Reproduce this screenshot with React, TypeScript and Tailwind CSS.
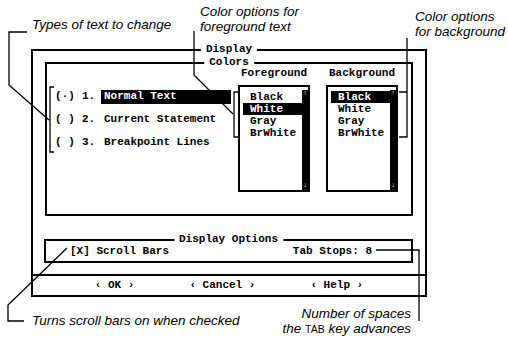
const mono = "font-['Liberation_Mono',monospace] font-bold text-[11px] leading-none text-black";
const note = "font-['Liberation_Sans',Arial,sans-serif] italic text-[13.5px] leading-[14.5px] text-black";

function Title({ text, top }: { text: string; top: string }) {
  return (
    <span className={`absolute left-1/2 -translate-x-1/2 whitespace-pre bg-white px-[5px] ${top}`}>
      {text}
    </span>
  );
}

function ListBox({ items, selected }: { items: string[]; selected: string }) {
  return (
    <div className="flex h-[107px] w-[72px] border-2 border-black">
      <div className="flex flex-1 flex-col pl-[3px] pt-[4px]">
        {items.map((it) => (
          <div
            key={it}
            className={
              it === selected
                ? "flex h-[12px] items-center bg-black pl-[7px] text-white"
                : "flex h-[12px] items-center pl-[7px]"
            }
          >
            {it}
          </div>
        ))}
      </div>
      <div className="mt-[3px] flex w-[6px] flex-col items-center justify-between bg-black pb-[1px] text-[7px] leading-none text-white">
        <span>↑</span>
        <span>↓</span>
      </div>
    </div>
  );
}

function RadioRow({ mark, num, label, on }: { mark: string; num: string; label: string; on?: boolean }) {
  return (
    <div className="flex h-[23px] items-center whitespace-pre">
      <span className="w-[27px]">{mark}</span>
      <span className="w-[19px]">{num}</span>
      <span
        className={
          on
            ? "flex h-[14px] w-[130px] items-center bg-black px-[3px] text-white"
            : "flex h-[14px] w-[130px] items-center px-[3px]"
        }
      >
        {label}
      </span>
    </div>
  );
}

export default function App() {
  const colors = ["Black", "White", "Gray", "BrWhite"];
  return (
    <div className="relative h-[348px] w-[508px] overflow-hidden bg-white">
      {/* callout labels above the dialog */}
      <div className={`flex h-[49px] items-start ${note}`}>
        <div className="mt-[18px] w-[168px] shrink-0 pl-[32px] whitespace-nowrap">Types of text to change</div>
        <div className="mt-[5px] w-[247px] shrink-0 pl-[32px]">
          Color options for
          <br />
          foreground text
        </div>
        <div className="mt-[10px] whitespace-nowrap">
          Color options
          <br />
          for background
        </div>
      </div>

      {/* dialog */}
      <div className={`relative ml-[31px] flex h-[248px] w-[396px] flex-col border-2 border-black ${mono}`}>
        <Title text="Display" top="top-[-7px]" />

        <div className="relative mx-[12px] mt-[11px] flex h-[154px] border-2 border-black">
          <Title text="Colors" top="top-[-7px]" />
          <div className="mt-[21px] flex w-[191px] shrink-0 flex-col pl-[8px]">
            <RadioRow mark="(·)" num="1." label="Normal Text" on />
            <RadioRow mark="( )" num="2." label="Current Statement" />
            <RadioRow mark="( )" num="3." label="Breakpoint Lines" />
          </div>
          <div className="flex w-[72px] flex-col items-center pt-[2px]">
            <div className="flex h-[14px] items-center">Foreground</div>
            <div className="mt-[5px]">
              <ListBox items={colors} selected="White" />
            </div>
          </div>
          <div className="ml-[16px] flex w-[72px] flex-col items-center pt-[2px]">
            <div className="flex h-[14px] items-center">Background</div>
            <div className="mt-[5px]">
              <ListBox items={colors} selected="Black" />
            </div>
          </div>
        </div>

        <div className="relative ml-[11px] mr-[12px] mt-[23px] flex h-[24px] items-center justify-between border-2 border-black pl-[24px] pr-[39px] whitespace-pre">
          <Title text="Display Options" top="top-[-7px]" />
          <span>[X] Scroll Bars</span>
          <span>Tab Stops: 8</span>
        </div>

        <div className="mt-[11px] flex h-[21px] items-center justify-center gap-[55px] border-t-2 border-black whitespace-pre">
          <span>‹ OK ›</span>
          <span>‹ Cancel ›</span>
          <span>‹ Help ›</span>
        </div>
      </div>

      {/* callout labels below the dialog */}
      <div className={`flex items-start justify-between ${note}`}>
        <div className="mt-[17px] pl-[32px] whitespace-nowrap">Turns scroll bars on when checked</div>
        <div className="mr-[97px] mt-[10px] text-right whitespace-nowrap">
          Number of spaces
          <br />
          the <span className="text-[10.5px] not-italic font-normal">TAB</span> key advances
        </div>
      </div>

      {/* leader lines */}
      <svg className="pointer-events-none absolute inset-0" width="508" height="348" fill="none" stroke="black" strokeWidth="1.3">
        <path d="M27 32 H9 V85 L49 120" />
        <path d="M54 87 H50 V152 H54" />
        <path d="M194 31 V75 L233 114" />
        <path d="M240 92 H234 V137 H240" />
        <path d="M407 38 V137 H399 M399 92 H407" />
        <path d="M67 248 L8 305 V321 H24" />
        <path d="M376 250 H419 V321" />
      </svg>
    </div>
  );
}
